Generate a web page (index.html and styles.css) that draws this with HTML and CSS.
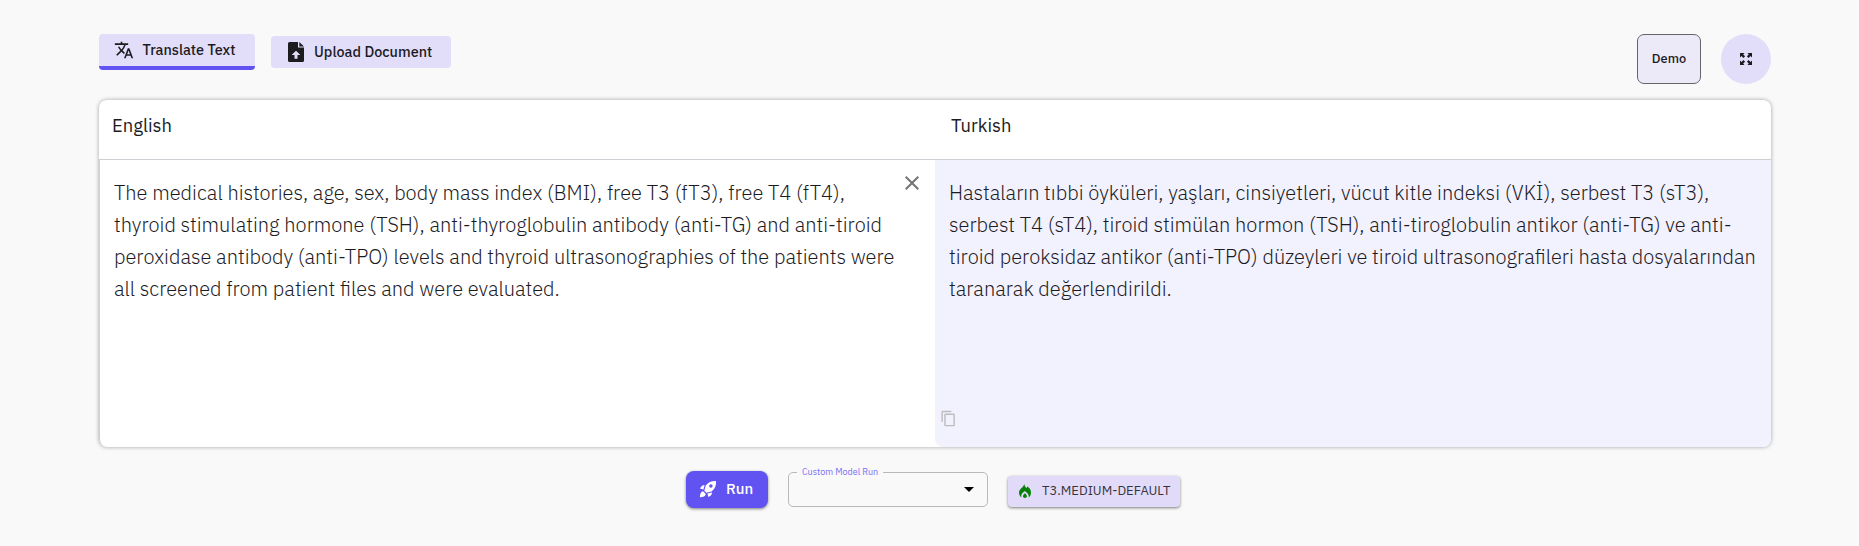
FILE: index.html
```html
<!DOCTYPE html>
<html lang="en">
<head>
<meta charset="utf-8">
<title>Translate</title>
<link rel="stylesheet" href="styles.css">
</head>
<body>
<main class="page">
  <header class="toolbar">
    <nav class="tabs">
      <button class="tab tab-active">
        <svg class="tab-icon" width="20" height="20" viewBox="0 0 24 24"><path d="M12.87 15.07l-2.54-2.51.03-.03c1.74-1.94 2.98-4.17 3.71-6.53H17V4h-7V2H8v2H1v1.99h11.17C11.5 7.92 10.44 9.75 9 11.35 8.07 10.32 7.3 9.19 6.69 8h-2c.73 1.63 1.73 3.17 2.98 4.56l-5.09 5.02L4 19l5-5 3.11 3.11.76-2.04zM18.5 10h-2L12 22h2l1.12-3h4.75L21 22h2l-4.5-12zm-2.62 7l1.62-4.33L19.12 17h-3.24z"/></svg>
        <span class="tab-label">Translate Text</span>
      </button>
      <button class="tab tab-upload">
        <svg class="tab-icon" width="16" height="20" viewBox="0 0 16 20"><path d="M1.5 0H10v5.5h6V18.500a1.500 1.500 0 0 1-1.500 1.500h-13A1.500 1.500 0 0 1 0 18.500v-17A1.500 1.500 0 0 1 1.500 0zM11.300 0L16 4.500h-4.700zM8 8.800L3.600 13h2.900v3.800h3V13h2.900z" fill-rule="evenodd"/></svg>
        <span class="tab-label">Upload Document</span>
      </button>
    </nav>
    <div class="actions">
      <button class="demo">Demo</button>
      <button class="expand" aria-label="Expand">
        <svg width="12" height="12" viewBox="0 0 12 12"><path d="M0 0h4.500L3.200 1.400l1.900 1.900-1.700 1.700-1.900-1.900L0 4.500zM12 0v4.500l-1.500-1.400-1.900 1.900-1.700-1.700 1.900-1.900L7.500 0zM0 12V7.500l1.500 1.400 1.900-1.900 1.700 1.700-1.900 1.900L4.500 12zM12 12H7.500l1.300-1.400-1.900-1.900 1.700-1.700 1.900 1.900L12 7.500z"/></svg>
      </button>
    </div>
  </header>

  <section class="card">
    <div class="languages">
      <div class="lang lang-source">English</div>
      <div class="lang lang-target">Turkish</div>
    </div>
    <div class="panes">
      <div class="pane source">
        <p class="text">The medical histories, age, sex, body mass index (BMI), free T3 (fT3), free T4 (fT4), thyroid stimulating hormone (TSH), anti-thyroglobulin antibody (anti-TG) and anti-tiroid peroxidase antibody (anti-TPO) levels and thyroid ultrasonographies of the patients were all screened from patient files and were evaluated.</p>
        <svg class="clear" width="24" height="24" viewBox="0 0 24 24"><path d="M19 6.410L17.590 5 12 10.590 6.410 5 5 6.410 10.590 12 5 17.590 6.410 19 12 13.410 17.590 19 19 17.590 13.410 12z"/></svg>
      </div>
      <div class="pane target">
        <p class="text">Hastaların tıbbi öyküleri, yaşları, cinsiyetleri, vücut kitle indeksi (VKİ), serbest T3 (sT3), serbest T4 (sT4), tiroid stimülan hormon (TSH), anti-tiroglobulin antikor (anti-TG) ve anti-tiroid peroksidaz antikor (anti-TPO) düzeyleri ve tiroid ultrasonografileri hasta dosyalarından taranarak değerlendirildi.</p>
        <svg class="copy" width="17" height="17" viewBox="0 0 24 24"><path d="M16 1H4c-1.100 0-2 .9-2 2v14h2V3h12V1zm3 4H8c-1.100 0-2 .9-2 2v14c0 1.100.9 2 2 2h11c1.100 0 2-.9 2-2V7c0-1.100-.9-2-2-2zm0 16H8V7h11v14z"/></svg>
      </div>
    </div>
  </section>

  <footer class="controls">
    <button class="run">
      <svg width="18" height="18" viewBox="0 0 18 18"><path fill-rule="evenodd" d="M17 1c.3 4.300-.8 7.500-4.400 10.400L7.300 12.700 5.300 10.700 6.700 5.400C9.500 2 12.700.8 17 1zM11.900 4.300a1.750 1.750 0 1 0 0 3.500 1.750 1.750 0 0 0 0-3.500zM5.600 4.900L4.500 9.600 1 8.600C2 6.500 3.400 5 5.600 4.900zM13.100 12.400c-.1 2.200-1.600 3.600-3.700 4.600l-1-3.500zM4.100 11.200l2.700 2.700c-.4 2.200-2.500 3.100-6 3.300.2-3.500 1.100-5.600 3.300-6z"/></svg>
      <span class="run-label">Run</span>
    </button>
    <fieldset class="select">
      <legend class="select-label">Custom Model Run</legend>
      <svg width="10" height="5" viewBox="0 0 10 5"><path d="M0 0h10L5 5z"/></svg>
    </fieldset>
    <div class="chip">
      <svg width="12" height="14" viewBox="0 0 12 14"><path d="M5.300 0c.2 2 .9 2.900 2.200 3.900.5-.4.7-.9.8-1.600C10.700 4.100 12 6 12 8.500c0 2.200-.9 3.900-2.300 4.900.2-1.500-.1-2.900-1.100-4L5.900 7 3.400 9.100c-1 1.200-1.300 2.700-1.100 4.200C.8 12.200 0 10.600 0 8.500 0 5 4.300 3.800 5.300 0z"/><path d="M5.900 9.300c1.200 1.200 2 2 2 3 0 1-.8 1.700-1.900 1.700S4 13.300 4 12.300c0-1 .8-1.800 1.900-3z"/></svg>
      <span class="chip-label">T3.MEDIUM-DEFAULT</span>
    </div>
  </footer>
</main>
</body>
</html>
```

FILE: styles.css
```css
* { box-sizing: border-box; }

body {
  margin: 0;
  background: #f9f9f9;
  color: #1c1b1f;
  font-family: "IBM Plex Sans", Roboto, "Noto Sans", sans-serif;
}

button {
  margin: 0;
  padding: 0;
  border: 0;
  font: inherit;
  color: inherit;
}

.page { padding: 34px 88px 0 99px; height: 546px; overflow: hidden; }

.toolbar { display: flex; justify-content: space-between; height: 66px; }

.tabs { display: flex; align-items: flex-start; gap: 16px; }

.tab {
  display: flex;
  align-items: center;
  background: #e2defa;
  border-radius: 4px;
  font-size: 14.4px;
  font-weight: 500;
  white-space: nowrap;
}

.tab-icon { flex: none; fill: #1c1b1f; }
.tab-label { padding-bottom: 2px; }
.tab-active { width: 156px; height: 36px; padding-left: 15px; gap: 8.5px; border-bottom: 4px solid #6152f2; }
.tab-upload { width: 180px; height: 32px; margin-top: 2px; padding-left: 17px; gap: 10px; }

.actions { display: flex; gap: 20px; }

.demo {
  width: 64px;
  height: 50px;
  padding-bottom: 1px;
  background: #ece9f8;
  border: 1px solid #66646a;
  border-radius: 7px;
  font-size: 12.8px;
  font-weight: 500;
}

.expand {
  display: grid;
  place-items: center;
  width: 50px;
  height: 50px;
  border-radius: 50%;
  background: #e2defa;
  fill: #1c1b1f;
}

.card {
  height: 347px;
  border-radius: 8px;
  background: #fff;
  box-shadow: 0 0 4px rgba(0, 0, 0, .35);
}

.languages {
  display: grid;
  grid-template-columns: 836px 836px;
  height: 60px;
  border-bottom: 1px solid #cfced4;
}

.lang { padding-top: 12px; font-size: 18.4px; line-height: 26px; }
.lang-source { padding-left: 13px; }
.lang-target { padding-left: 16px; }

.panes { display: grid; grid-template-columns: 836px 836px; height: 287px; }
.pane { display: flex; }
.source { justify-content: space-between; border-left: 1px solid #cfced4; border-radius: 0 0 0 8px; padding: 17px 11px 0 14px; }
.target { flex-direction: column; justify-content: space-between; background: #f2f1fe; border-radius: 0 0 8px 8px; padding: 17px 0 20px 5px; }
.target .text { padding: 0 14px 0 9px; }

.text { margin: 0; font-size: 20px; font-weight: 300; line-height: 32px; color: #1c1b1f; }

.clear { flex: none; margin-top: -6px; fill: #757575; }
.copy { fill: #bcbcc0; }

.controls { display: flex; padding: 24px 0 0 587px; }

.run {
  display: flex;
  align-items: center;
  gap: 9px;
  width: 82px;
  height: 37px;
  padding-left: 13px;
  padding-bottom: 1px;
  border-radius: 8px;
  background: #6152f2;
  color: #fff;
  fill: #fff;
  font-size: 15px;
  font-weight: 500;
  box-shadow: 0 1px 3px rgba(0, 0, 0, .5);
}

.run-label { padding-bottom: 1px; }

.select {
  display: flex;
  justify-content: flex-end;
  width: 200px;
  height: 40px;
  margin: -4px 0 0 20px;
  padding: 10px 13px 0 8px;
  border: 1px solid #b9b9b9;
  border-radius: 5px;
  min-width: 0;
}

.select-label { padding: 0 5px; font-size: 9px; line-height: 10px; color: #7a6df5; }

.chip {
  display: flex;
  align-items: center;
  gap: 11px;
  width: 172px;
  height: 31px;
  margin: 5px 0 0 20px;
  padding: 0 0 2px 11px;
  border-radius: 4px;
  background: #e1dbf9;
  box-shadow: 0 1px 3px rgba(0, 0, 0, .5);
  color: #36343b;
  font-size: 13px;
  white-space: nowrap;
}

.chip svg { flex: none; fill: #088008; }
```
